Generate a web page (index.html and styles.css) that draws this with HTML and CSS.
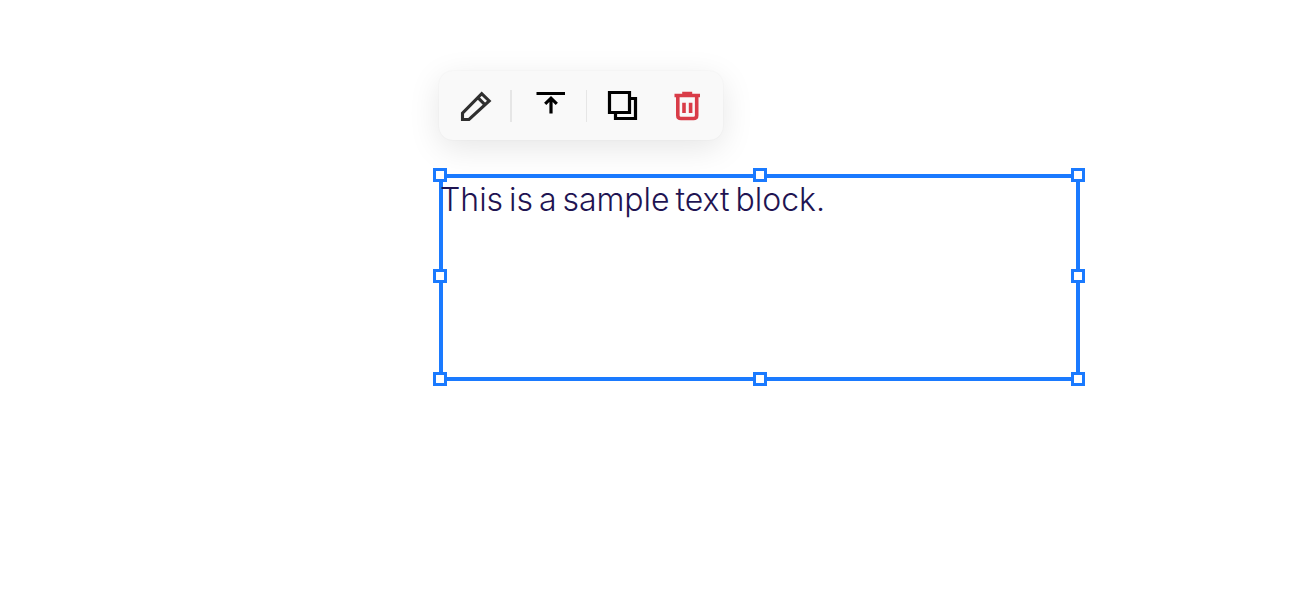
FILE: index.html
```html
<!DOCTYPE html>
<html lang="en">
<head>
<meta charset="utf-8">
<title>Text block editor</title>
<link rel="stylesheet" href="styles.css">
</head>
<body>
<main class="canvas">
  <div class="toolbar">
    <button class="tool tool-edit" aria-label="Edit">
      <svg viewBox="0 0 32 32" width="32" height="32"><path class="ink-dark" d="M2.5 29.5V23.2L21.7 3.6L29.2 11L9 29.5Z M17.9 7.6L25.1 14.8"/></svg>
    </button>
    <span class="sep sep-a"></span>
    <button class="tool tool-top" aria-label="Bring to front">
      <svg viewBox="0 0 32 32" width="32" height="32"><path class="ink-heavy" d="M1.5 3.5H30 M16 23.5V9 M10.2 13.8L16 8.2L21.8 13.8"/></svg>
    </button>
    <span class="sep sep-b"></span>
    <button class="tool tool-copy" aria-label="Duplicate">
      <svg viewBox="0 0 32 32" width="32" height="32"><path class="ink" d="M3.5 2.5H23.5V22.5H3.5Z M23.5 8.5H29.5V28.5H9.5V22.5"/></svg>
    </button>
    <button class="tool tool-trash" aria-label="Delete">
      <svg viewBox="0 0 32 32" width="32" height="32"><path class="ink-red" d="M3.5 5.5H29 M11.2 3.5H21.2 M6.8 6V25.5Q6.8 28.5 10 28.5H22.5Q25.7 28.5 25.7 25.5V6 M13 12.7V23 M19.6 12.7V23"/></svg>
    </button>
  </div>
  <section class="selection">
    <p class="sample">This is a sample text block.</p>
    <span class="handle h-tl"></span>
    <span class="handle h-tc"></span>
    <span class="handle h-tr"></span>
    <span class="handle h-ml"></span>
    <span class="handle h-mr"></span>
    <span class="handle h-bl"></span>
    <span class="handle h-bc"></span>
    <span class="handle h-br"></span>
  </section>
</main>
</body>
</html>
```

FILE: styles.css
```css
html, body {
  margin: 0;
  height: 100%;
  background: #ffffff;
  overflow: hidden;
}
.canvas {
  display: flex;
  flex-direction: column;
  align-items: flex-start;
  padding: 71px 0 0 439px;
}
.toolbar {
  display: flex;
  align-items: center;
  width: 284px;
  height: 69px;
  box-sizing: border-box;
  padding-left: 21px;
  background: #f9f9f9;
  border-radius: 14px;
  box-shadow: 0 8px 32px rgba(0, 0, 0, 0.1), 0 0 2px rgba(0, 0, 0, 0.05);
}
.tool {
  display: flex;
  width: 32px;
  height: 32px;
  padding: 0;
  border: 0;
  background: none;
  flex: none;
}
.tool svg {
  display: block;
  fill: none;
}
.ink-dark { stroke: #2f2f2f; stroke-width: 3.1; }
.ink { stroke: #000000; stroke-width: 3.2; }
.ink-heavy { stroke: #000000; stroke-width: 3.2; }
.ink-red { stroke: #d93c48; stroke-width: 3.6; }
.sep {
  flex: none;
  height: 32px;
  background: #e6e6e6;
}
.sep-a { width: 2px; margin: 0 22.5px 0 18px; }
.sep-b { width: 1px; margin: 0 19px 0 19.5px; }
.tool-trash { margin-left: 32.5px; }
.selection {
  position: relative;
  width: 633px;
  height: 199px;
  margin-top: 34px;
  border: 4px solid #1a7aff;
}
.sample {
  margin: 0 0 0 -3px;
  padding-top: 2px;
  font-family: "Inter", sans-serif;
  font-weight: 300;
  font-size: 32px;
  line-height: 40px;
  letter-spacing: -0.03px;
  word-spacing: -3px;
  color: #1f1452;
}
.handle {
  position: absolute;
  width: 8px;
  height: 8px;
  background: #ffffff;
  border: 3px solid #1a7aff;
}
.h-tl { left: -10px; top: -10px; }
.h-tc { left: 310px; top: -10px; }
.h-tr { left: 628px; top: -10px; }
.h-ml { left: -10px; top: 91px; }
.h-mr { left: 628px; top: 91px; }
.h-bl { left: -10px; top: 194px; }
.h-bc { left: 310px; top: 194px; }
.h-br { left: 628px; top: 194px; }
```
